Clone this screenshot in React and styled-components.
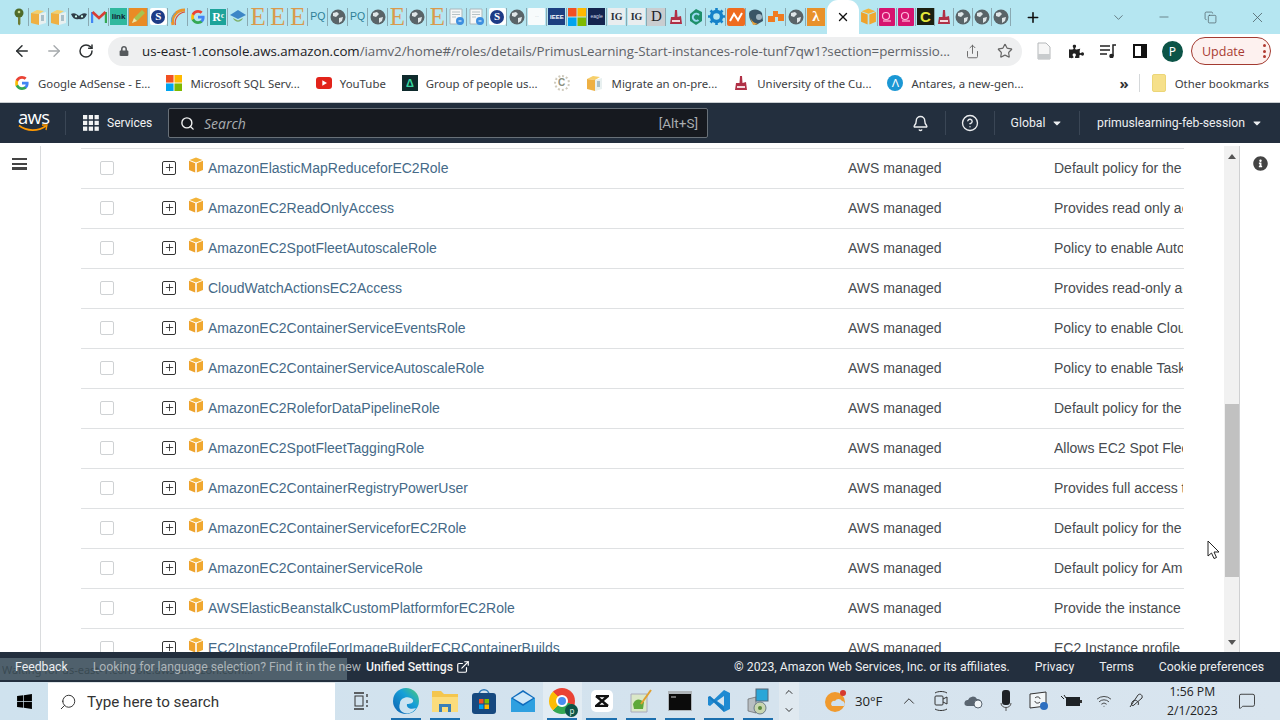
import React from "react";
import styled, { createGlobalStyle } from "styled-components";
import { ArrowLeft, ArrowRight, RotateCw, Star, Share, Bell, CircleHelp, Search, ChevronDown, ChevronUp, Minus, X, Plus, Wifi, Copy, ExternalLink, MessageSquare } from "lucide-react";
import { FaPuzzlePiece, FaInfoCircle, FaWindows, FaLock, FaCaretDown } from "react-icons/fa";

const Global = createGlobalStyle`
  html, body { margin: 0; padding: 0; background: #fff; overflow: hidden; }
  * { box-sizing: border-box; }
`;

const Page = styled.div`
  width: 1280px; height: 720px; display: flex; flex-direction: column; overflow: hidden; position: relative;
  font-family: "Liberation Sans", Arial, sans-serif; background: #fff;
`;

/* ---------- tab strip ---------- */
const TabStrip = styled.div`
  height: 34px; flex: none; background: #b5e6f1; display: flex; align-items: stretch; padding-left: 9px;
`;
const Tab = styled.div`
  width: ${p => p.$w || 19.93}px; display: flex; align-items: center; justify-content: center; position: relative;
  padding-bottom: 1px;
  &::after { content: ""; position: absolute; right: 0; top: 8px; height: 18px; width: 1px; background: #7f9aa3; opacity: ${p => p.$last ? 0 : 0.8}; }
`;
const ActiveTab = styled.div`
  width: 32px; background: #fff; border-radius: 11px 11px 0 0; display: flex; align-items: center; justify-content: center;
  color: #111; margin-left: 1px; flex: none;
`;
const NewTab = styled.div`
  margin-left: 14px; width: 16px; display: flex; align-items: center; color: #111;
`;
const WindowControls = styled.div`
  margin-left: auto; display: flex; align-items: center; color: #4b5b62;
`;
const WinBtn = styled.div`
  width: ${p => p.$w}px; display: flex; justify-content: center;
`;
const Fav = styled.span`
  width: ${p => p.$s || 16}px; height: ${p => p.$h || p.$s || 16}px; display: inline-flex; align-items: center; justify-content: center; flex: none;
  background: ${p => p.$bg || "transparent"}; color: ${p => p.$fg || "#333"};
  font-family: ${p => p.$serif ? '"Liberation Serif", serif' : '"Liberation Sans", sans-serif'};
  font-size: ${p => p.$fs || 12}px; font-weight: ${p => p.$fw || 400}; line-height: 1; overflow: hidden;
  border-radius: ${p => p.$r || 0}px; letter-spacing: ${p => p.$ls || 0}px;
`;

const Box = ({ s = 16 }) => (
  <svg width={s} height={s} viewBox="0 0 16 16">
    <path d="M8 0.5 L14.5 3 L8 5.5 L1.5 3Z" fill="#f3b43a" />
    <path d="M1 3.8 L7.2 6.2 V15.5 L1 13Z" fill="#eea22c" />
    <path d="M15 3.8 L8.8 6.2 V15.5 L15 13Z" fill="#f0a830" />
  </svg>
);
const BoxDoc = () => (
  <svg width="18" height="18" viewBox="0 0 18 18">
    <path d="M1 5 L7 2 L14 3 L9 6Z" fill="#f6cf6a" />
    <path d="M1 5 L9 6 V17 L1 15Z" fill="#eeb043" />
    <path d="M9 6 L16 4 V15 L9 17Z" fill="#e8f0f0" />
    <path d="M11 8h3M11 10h3M11 12h3" stroke="#6b8fa0" strokeWidth="1" />
  </svg>
);
const Globe = () => (
  <svg width="16" height="16" viewBox="0 0 16 16">
    <circle cx="8" cy="8" r="7.5" fill="#596468" />
    <path d="M3 4 L7 3 L9 5 L6 8 L3 7Z M9 9 L13 8 L12 12 L9 14Z" fill="#dfe6e8" />
  </svg>
);
const DocE = () => (
  <svg width="16" height="18" viewBox="0 0 16 18">
    <path d="M1 1h12v15H1z" fill="#f6f7f7" stroke="#a9b7bb" />
    <path d="M3 4h8M3 6.5h8M3 9h4" stroke="#b6c2c5" />
    <circle cx="11" cy="13" r="4" fill="#3d8fe0" />
    <path d="M9.5 13h3" stroke="#fff" />
  </svg>
);
const Key = () => (
  <svg width="12" height="18" viewBox="0 0 12 18">
    <circle cx="6" cy="5" r="4.5" fill="#4f6b2a" />
    <circle cx="6" cy="4" r="1.3" fill="#c8d890" />
    <path d="M5 9h2.4v7l-1.2 1.4L5 16z" fill="#6d7c36" />
  </svg>
);
const Bird = () => (
  <svg width="16" height="12" viewBox="0 0 16 12">
    <path d="M0 3 C3 1 6 3 8 5 C10 3 13 1 16 3 C14 8 11 9 8 8 C5 9 2 8 0 3Z" fill="#2f3d48" />
    <circle cx="5" cy="5.4" r="1.1" fill="#cfe" /><circle cx="11" cy="5.4" r="1.1" fill="#cfe" />
  </svg>
);
const Gmail = () => (
  <svg width="16" height="14" viewBox="0 0 16 14">
    <path d="M1 13V2" stroke="#4285f4" strokeWidth="2.4" /><path d="M15 13V2" stroke="#34a853" strokeWidth="2.4" />
    <path d="M1.5 2 L8 8 L14.5 2" fill="none" stroke="#d93d33" strokeWidth="2.6" />
  </svg>
);
const Pencil = () => (
  <svg width="18" height="18" viewBox="0 0 18 18">
    <rect width="18" height="18" fill="#e98b25" />
    <path d="M3 15 L5 10 L13 2 L16 5 L8 13Z" fill="#a7c350" />
    <path d="M3 15 L5 10 L8 13Z" fill="#f7e1a5" />
  </svg>
);
const Seal = () => (
  <Fav $bg="#fff" $s={17} $r={2}>
    <Fav as="span" $s={14} $r={7} $bg="#1d3b86" $fg="#fff" $fs={11} $fw={700} $serif>S</Fav>
  </Fav>
);
const Arc = () => (
  <svg width="18" height="18" viewBox="0 0 18 18">
    <path d="M4 17 C2 9 7 2 16 2" fill="none" stroke="#e9952a" strokeWidth="3" />
    <path d="M6.5 17 C5 11 9 5 16 4" fill="none" stroke="#d94d3a" strokeWidth="1.2" />
    <path d="M2.5 14 C2 10 4 6 7 4" fill="none" stroke="#5aa6d6" strokeWidth="1" />
  </svg>
);
const GoogleG = ({ s = 16 }) => (
  <svg width={s} height={s} viewBox="0 0 16 16">
    <path d="M14.6 8.2c0-.5 0-1-.1-1.4H8v2.7h3.7c-.2.9-.7 1.6-1.4 2.1v1.7h2.3c1.3-1.2 2-3 2-5.1z" fill="#4285f4" />
    <path d="M8 15c1.9 0 3.5-.6 4.6-1.7l-2.3-1.7c-.6.4-1.4.7-2.3.7-1.8 0-3.3-1.2-3.9-2.8H1.8v1.8C3 13.5 5.3 15 8 15z" fill="#34a853" />
    <path d="M4.1 9.5C3.8 8.6 3.8 7.4 4.1 6.5V4.7H1.8c-.8 1.5-.8 5.1 0 6.6z" fill="#fbbc05" />
    <path d="M8 3.8c1 0 1.9.4 2.6 1l2-2C11.4 1.7 9.800 1 8 1 5.300 1 3 2.500 1.800 4.700l2.300 1.800C4.700 5 6.200 3.800 8 3.800z" fill="#ea4335" />
  </svg>
);
const Cap = () => (
  <svg width="18" height="16" viewBox="0 0 18 16">
    <path d="M9 1 L17 6 L9 10 L1 6Z" fill="#3d86c6" />
    <path d="M4 9 C6 14 12 14 14 9 L9 11.500Z" fill="#7fb069" />
  </svg>
);
const MsLogo = ({ s = 18 }) => (
  <svg width={s} height={s} viewBox="0 0 18 18">
    <rect width="8.500" height="8.500" fill="#f25022" /><rect x="9.500" width="8.500" height="8.500" fill="#ffb900" />
    <rect y="9.500" width="8.500" height="8.500" fill="#00a4ef" /><rect x="9.500" y="9.500" width="8.500" height="8.500" fill="#7fba00" />
  </svg>
);
const RedMark = ({ s = 16 }) => (
  <svg width={s} height={s} viewBox="0 0 16 16">
    <path d="M7 1 L9 1 L9.500 8 L13 7 L14 15 L2 15 L3 8 L6.500 8Z" fill="#b03046" />
    <rect x="4" y="11" width="8" height="2" fill="#f3d9de" />
  </svg>
);
const EMark = () => (
  <svg width="16" height="18" viewBox="0 0 16 18">
    <path d="M8 1 L14 4 V13 L8 17 L2 13 V6Z" fill="#1f8f6a" />
    <path d="M11 7 A3.500 3.500 0 1 0 10.500 12" fill="none" stroke="#9ad8f0" strokeWidth="2" />
  </svg>
);
const Gear = () => (
  <svg width="17" height="17" viewBox="0 0 17 17">
    <circle cx="8.500" cy="8.500" r="5.000" fill="none" stroke="#1682c9" strokeWidth="3.400" />
    <g stroke="#1682c9" strokeWidth="2.600">
      <path d="M8.500 0v3M8.500 14v3M0 8.500h3M14 8.500h3M2.500 2.500l2 2M12.500 12.500l2 2M14.500 2.500l-2 2M4.500 12.500l-2 2" />
    </g>
  </svg>
);
const Wave = () => (
  <svg width="18" height="18" viewBox="0 0 18 18">
    <rect width="18" height="18" rx="2" fill="#ef6c1f" />
    <path d="M3 13 L7 6 L11 12 L15 5" fill="none" stroke="#fff" strokeWidth="2" />
  </svg>
);
const BirdBall = () => (
  <svg width="18" height="18" viewBox="0 0 18 18">
    <path d="M2 5 C5 0 12 1 15 5 L16 13 L9 17 C4 15 2 11 2 5Z" fill="#3a5566" />
    <path d="M3 9 C5 14 9 16 12 16 L6 17Z" fill="#e8a33a" />
    <circle cx="12" cy="9" r="3" fill="#9fb4c0" />
  </svg>
);
const OrangeLink = () => (
  <svg width="18" height="16" viewBox="0 0 18 16">
    <path d="M1 7h5v-5h5v3h6v7h-6v-4H8v5H1z" fill="#ef7c22" />
  </svg>
);
const Lambda = () => (
  <Fav $s={18} $bg="#e8912a" $fg="#fff" $fs={15} $fw={700} $serif>λ</Fav>
);
const PinkCloud = () => (
  <svg width="16" height="18" viewBox="0 0 16 18">
    <rect width="16" height="18" rx="1" fill="#d6136f" />
    <circle cx="7" cy="8" r="3.500" fill="none" stroke="#fbd" strokeWidth="1.200" />
    <path d="M4 13h8" stroke="#fbd" strokeWidth="1.200" />
  </svg>
);
const WhiteCard = () => (
  <Fav $s={17} $bg="#f7fbfc" $r={1} $fg="#7a8a90" $fs={4}>···</Fav>
);

const fav = [
  <Key />, <BoxDoc />, <BoxDoc />, <Bird />, <Gmail />,
  <Fav $s={17} $bg="#2fb89e" $fg="#123" $fs={8} $fw={700}>link</Fav>,
  <Pencil />, <Seal />, <Arc />, <GoogleG />,
  <Fav $s={16} $bg="#1da39a" $fg="#fff" $fs={12} $fw={700} $serif>Rᶜ</Fav>,
  <Cap />,
];
const E = () => <Fav $s={18} $h={28} $fg="#d99a4e" $fs={25} $serif>E</Fav>;
const PQ = () => <Fav $s={18} $fg="#2f7f96" $fs={10.500}>PQ</Fav>;
const IG = () => <Fav $s={17} $bg="#e9edef" $fg="#27313a" $fs={10} $fw={700} $serif>IG</Fav>;
const tabs = [
  ...fav, <E />, <E />, <E />, <PQ />, <Globe />, <PQ />, <Globe />, <E />, <Globe />, <E />, <DocE />, <DocE />,
  <Seal />, <Globe />, <WhiteCard />,
  <Fav $s={17} $bg="#1c3f80" $fg="#fff" $fs={6} $fw={700}>IEEE</Fav>, <MsLogo />,
  <Fav $s={17} $bg="#14254f" $fg="#cfd8e8" $fs={5}>eagle</Fav>,
  <IG />, <IG />,
  <Fav $s={18} $bg="#c9cdd0" $fg="#1c2226" $fs={15} $serif>D</Fav>,
  <RedMark />, <EMark />, <Gear />, <Wave />, <BirdBall />, <OrangeLink />, <Globe />, <Lambda />,
];
const tabsAfter = [
  <Box s={17} />, <PinkCloud />, <PinkCloud />,
  <Fav $s={17} $bg="#1b1f10" $fg="#e3e63a" $fs={15} $fw={700}>C</Fav>,
  <RedMark />, <Globe />, <Globe />, <Globe />,
];

/* ---------- toolbar ---------- */
const Toolbar = styled.div`
  height: 34px; flex: none; display: flex; align-items: center; padding-left: 6px; background: #fff; color: #333;
`;
const NavBtn = styled.div`
  width: 32px; display: flex; justify-content: center; color: ${p => p.$off ? "#a5a9ac" : "#2b2f31"}; flex: none;
`;
const Omnibox = styled.div`
  width: 914px; height: 29px; margin-left: 6px; background: #eeeff0; border-radius: 15px; flex: none;
  display: flex; align-items: center; padding-left: 11px; color: #55595c;
`;
const UrlText = styled.div`
  margin-left: 13px; font-family: "Open Sans", sans-serif; font-size: 13.330px; color: #5f6368; white-space: nowrap; width: 810px; letter-spacing: -0.040px;
  b { font-weight: 400; color: #202124; }
`;
const OmniIcons = styled.div`
  display: flex; align-items: center; gap: 17px; margin-left: 13px; color: #666;
`;
const ToolIcons = styled.div`
  display: flex; align-items: center; margin-left: 6px;
`;
const ToolIcon = styled.div`
  width: 32px; display: flex; justify-content: center; color: #222;
`;
const Avatar = styled.div`
  width: 21px; height: 21px; border-radius: 50%; background: #0c5447; color: #fff; font: 400 12px "Noto Sans", sans-serif;
  display: flex; align-items: center; justify-content: center; margin-left: 6px;
`;
const UpdatePill = styled.div`
  margin-left: 8px; width: 80px; height: 28px; border: 1px solid #a33a30; border-radius: 14px; background: #fdf1ef; color: #a83b32;
  font: 400 12.500px "Open Sans", sans-serif; display: flex; align-items: center; padding-left: 10px; gap: 18px;
`;
const Dots = styled.span`
  display: flex; flex-direction: column; gap: 2.500px;
  i { width: 3px; height: 3px; border-radius: 50%; background: #b03a30; display: block; }
`;

/* ---------- bookmarks ---------- */
const Bookmarks = styled.div`
  height: 35px; flex: none; display: flex; align-items: center; padding: 0 11px 4px 14px; gap: 16px; background: #fff;
  border-bottom: 1px solid #c9ced1;
`;
const Bm = styled.div`
  display: flex; align-items: center; gap: 8px; font-family: "Noto Sans", sans-serif; font-size: 11.400px; color: #3c4043; white-space: nowrap;
`;
const BmEnd = styled.div`
  margin-left: auto; display: flex; align-items: center; gap: 12px; font-family: "Noto Sans", sans-serif; font-size: 11.400px; color: #3c4043;
`;
const Chevrons = styled.span`
  font-size: 15px; color: #333; font-weight: 700; margin-right: -2px;
`;
const VSep = styled.span`
  width: 1px; height: 18px; background: #d5d8da;
`;
const Folder = styled.span`
  width: 14px; height: 18px; border-radius: 2px; background: #f6e08a; border: 1px solid #ecd678; display: block; margin-right: -3px;
`;
const YouTube = () => (
  <svg width="16" height="12" viewBox="0 0 16 12"><rect width="16" height="12" rx="3" fill="#e2231a" /><path d="M6.300 3.200 L11 6 L6.300 8.800Z" fill="#fff" /></svg>
);
const Delta = () => (
  <Fav $s={16} $bg="#0e2a2c" $fg="#38d6a0" $fs={11} $fw={700}>Δ</Fav>
);
const CBadge = () => (
  <Fav $s={16} $r={8} $fg="#8a8f80" $fs={10} $fw={700} style={{ border: "2px dotted #cfcabc" }}>C</Fav>
);
const Antares = () => (
  <Fav $s={16} $r={8} $bg="#1b97d4" $fg="#fff" $fs={11}>Λ</Fav>
);

/* ---------- AWS nav ---------- */
const navFont = '"Roboto", sans-serif';
const AwsNav = styled.nav`
  height: 40px; flex: none; background: #232f3e; display: flex; align-items: center; color: #e8eaeb;
`;
const AwsLogo = styled.div`
  width: 66px; height: 24px; border-right: 1px solid #3a4655; padding-left: 18px; position: relative; display: flex; flex-direction: column; flex: none;
  span { font: 400 18.500px/15px "Open Sans", sans-serif; color: #fff; letter-spacing: -0.700px; height: 15px; display: block; margin-top: -2px; }
`;
const Services = styled.div`
  display: flex; align-items: center; gap: 8px; width: 102px; padding-left: 17px; flex: none; font: 400 12px ${navFont}; color: #f2f3f3;
`;
const AwsSearch = styled.div`
  width: 540px; height: 30px; background: #16191f; border: 1px solid #687078; border-radius: 2px; display: flex; align-items: center; padding: 0 9px 0 11px; flex: none;
  color: #f2f3f3;
`;
const SearchHint = styled.span`
  font: italic 400 14px "Open Sans", sans-serif; color: #a9adb0; margin-left: 9px; flex: 1;
`;
const AltS = styled.span`
  font: 400 13.500px ${navFont}; color: #a9adb0;
`;
const NavRight = styled.div`
  margin-left: auto; display: flex; align-items: center; height: 24px; font: 400 12.250px ${navFont}; color: #eceef0;
`;
const NavCell = styled.div`
  height: 24px; display: flex; align-items: center; justify-content: center; gap: 6px; width: ${p => p.$w}px; flex: none;
  border-right: ${p => p.$sep ? "1px solid #3a4655" : "none"};
`;

/* ---------- content ---------- */
const Body = styled.div`
  flex: 1; min-height: 0; display: flex; overflow: hidden; background: #fff;
`;
const SideRail = styled.aside`
  width: 41px; flex: none; border-right: 1px solid #dadcde; margin-top: 3px; padding: 12px 0 0 12px;
`;
const Burger = styled.div`
  width: 15px; display: flex; flex-direction: column; gap: 2.500px;
  i { display: block; height: 2.200px; background: #444; }
`;
const TableArea = styled.div`
  width: 1183px; flex: none; padding: 5px 40px 0 40px; overflow: hidden;
`;
const Row = styled.div`
  display: grid; grid-template-columns: 81px 26px 20px 640px 206px 129px; width: 1103px; height: 40px; align-items: center; padding-bottom: 2px;
  border-top: 1px solid #dfe1e3; font-size: 14px; color: #474b4f; white-space: nowrap; overflow: hidden;
`;
const CheckCell = styled.div`
  padding-left: 19px; display: flex;
`;
const Check = styled.span`
  width: 14px; height: 14px; border: 1px solid #cfd2d4; border-radius: 2px; background: #fff; display: block;
`;
const PlusBox = styled.span`
  width: 14px; height: 14px; border: 1px solid #333; border-radius: 2px; display: flex; align-items: center; justify-content: center; color: #222;
`;
const PolicyIcon = styled.span`
  display: flex; margin-bottom: 5px;
`;
const PolicyLink = styled.a`
  color: #456a88; text-decoration: none;
`;
const Clip = styled.div`
  overflow: hidden;
`;
const ScrollBar = styled.div`
  width: 16px; flex: none; background: #f1f1f1; border-right: 1px solid #cfd0d2; margin-top: 3px; display: flex; flex-direction: column; align-items: center;
  padding-top: 8px; color: #555;
`;
const Thumb = styled.div`
  width: 14px; height: 173px; background: #c1c1c1; margin-top: 245px;
`;
const ArrowUp = styled.span`
  width: 0; height: 0; border: 4px solid transparent; border-top: 0; border-bottom: 5px solid #555;
`;
const ArrowDown = styled.span`
  width: 0; height: 0; border: 4px solid transparent; border-bottom: 0; border-top: 5px solid #555; margin-top: 63px;
`;
const InfoRail = styled.div`
  flex: 1; padding: 13px 0 0 13px; color: #444;
`;
const Cursor = styled.svg`
  position: absolute; left: 1207px; top: 540px;
`;

/* ---------- footer ---------- */
const Footer = styled.footer`
  height: 30px; flex: none; background: #232f3e; position: relative; display: flex; align-items: center; padding: 0 16px 1px 15px;
  font: 400 12.250px ${navFont}; color: #eceef0; white-space: nowrap;
`;
const Bubble = styled.div`
  position: absolute; left: 0; top: 6px; width: 347px; height: 22px; background: rgba(140,165,172,0.42); color: rgba(40,55,60,.55);
  font: 400 11px "Noto Sans", sans-serif; padding: 4px 0 0 2px; z-index: 0;
`;
const FootText = styled.span`
  position: relative; z-index: 1;
`;
const Lang = styled.span`
  position: relative; z-index: 1; margin-left: 25px; color: #adb5b9; display: flex; align-items: center;
  b { color: #f2f3f3; font-weight: 500; margin-left: 5px; }
  svg { margin-left: 3px; color: #fff; }
`;
const FootRight = styled.div`
  margin-left: auto; display: flex; gap: 25px; position: relative; z-index: 1;
`;

/* ---------- taskbar ---------- */
const Taskbar = styled.div`
  height: 38px; flex: none; background: linear-gradient(90deg, #cfe2ee, #d5e3ee 60%, #d9e5ef); display: flex; align-items: center; position: relative; color: #222;
`;
const StartBtn = styled.div`
  width: 48px; display: flex; justify-content: center; color: #000; flex: none;
`;
const SearchBox = styled.div`
  width: 287px; height: 38px; flex: none; background: #fff; border-top: 1px solid #dfe5e9; display: flex; align-items: center; padding-left: 11px; gap: 10px;
  font: 400 15.200px ${navFont}; color: #333;
`;
const TaskSlot = styled.div`
  width: ${p => p.$w || 39.200}px; height: 38px; flex: none; display: flex; align-items: center; justify-content: center; position: relative;
  background: ${p => p.$active ? "#e2ecf3" : "transparent"};
  &::after { content: ""; display: ${p => p.$open ? "block" : "none"}; position: absolute; bottom: 0; left: 4.500px; right: 4.500px; height: 2px; background: #1c6fae; }
`;
const ChevronStack = styled.div`
  width: 20px; height: 38px; background: #e0e9f0; margin-left: 1px; display: flex; flex-direction: column; align-items: center; justify-content: center; gap: 6px; color: #333; flex: none;
`;
const TrayRow = styled.div`
  display: flex; align-items: center; flex: 1; padding-left: 22px;
`;
const Temp = styled.span`
  font: 400 13.200px "Open Sans", sans-serif; color: #222; margin-left: 2px; width: 38px;
`;
const TraySlot = styled.div`
  width: ${p => p.$w || 32.500}px; display: flex; justify-content: center; color: #333; flex: none;
`;
const Clock = styled.div`
  width: 80px; text-align: center; font: 400 12.200px/19px "Open Sans", sans-serif; color: #222; flex: none;
`;
const ChromeBall = styled.span`
  width: 26px; height: 26px; border-radius: 50%; position: relative; display: block;
  background: conic-gradient(#ea4335 0 30%, #34a853 30% 62%, #fbbc05 62% 88%, #ea4335 88%);
  &::before { content: ""; position: absolute; inset: 7px; border-radius: 50%; background: #4a8ef0; border: 2px solid #fff; }
`;
const ChromeBadge = styled.span`
  position: absolute; right: -3px; bottom: -3px; width: 13px; height: 13px; border-radius: 50%; background: #0c5447; color: #d8f0e0;
  font: 400 8px/13px "Noto Sans", sans-serif; text-align: center;
`;

const Edge = () => (
  <svg width="28" height="28" viewBox="0 0 28 28">
    <defs><linearGradient id="eg" x1="0" y1="1" x2="1" y2="0"><stop offset="0" stopColor="#0c5fb0" /><stop offset="0.6" stopColor="#17a0d8" /><stop offset="1" stopColor="#52cc70" /></linearGradient></defs>
    <circle cx="14" cy="14" r="13" fill="url(#eg)" />
    <path d="M8 16 C8 10 18 8 21 13 C22 16 18 17 15 17 C14 21 19 23 24 21 C21 27 13 28 9 24 C7 22 7 19 8 16Z" fill="#d5e8f2" opacity="0.95" />
  </svg>
);
const Explorer = () => (
  <svg width="28" height="24" viewBox="0 0 28 24">
    <path d="M1 2h9l3 3h14v18H1z" fill="#f4c64e" /><path d="M1 8h26v15H1z" fill="#fbdc7c" />
    <path d="M8 23v-8h12v8h-3v-5h-6v5z" fill="#3a7fb8" />
  </svg>
);
const Store = () => (
  <svg width="26" height="28" viewBox="0 0 26 28">
    <path d="M8 8 C8 1 18 1 18 8" fill="none" stroke="#2b78b8" strokeWidth="1.600" />
    <rect x="1" y="6" width="24" height="21" rx="3" fill="#16497f" />
    <rect x="8" y="12" width="4.500" height="4.500" fill="#f25022" /><rect x="13.500" y="12" width="4.500" height="4.500" fill="#7fba00" />
    <rect x="8" y="17.500" width="4.500" height="4.500" fill="#00a4ef" /><rect x="13.500" y="17.500" width="4.500" height="4.500" fill="#ffb900" />
  </svg>
);
const Mail = () => (
  <svg width="26" height="24" viewBox="0 0 26 24">
    <path d="M1 9 L13 1 L25 9 V23 H1Z" fill="#0f6cbd" /><path d="M3 9 L13 3 L23 9 L13 15Z" fill="#cfe8f8" />
    <path d="M1 9 L13 17 L25 9 V23 H1Z" fill="#2ea0e0" />
  </svg>
);
const CapCut = () => (
  <Fav $s={22} $r={5} $bg="#fff">
    <svg width="14" height="12" viewBox="0 0 14 12"><path d="M1 1h12L1 11h12M1 1l12 10" fill="none" stroke="#111" strokeWidth="2.400" /></svg>
  </Fav>
);
const Notepad = () => (
  <svg width="24" height="26" viewBox="0 0 24 26">
    <path d="M2 6h16v18H2z" fill="#dbe8c8" stroke="#aab" /><path d="M4 16 C7 10 11 11 15 14 L14 21 H5Z" fill="#5fa83a" />
    <path d="M12 16 L22 2" stroke="#e0a030" strokeWidth="2" />
  </svg>
);
const Cmd = () => (
  <svg width="24" height="20" viewBox="0 0 24 20"><rect width="24" height="20" fill="#aeb4b8" /><rect x="1" y="3" width="22" height="16" fill="#0b0b0b" /><path d="M3 6h5" stroke="#ccc" /></svg>
);
const VsCode = () => (
  <svg width="24" height="24" viewBox="0 0 24 24">
    <path d="M17 1 L23 4 V20 L17 23 L7 13.500 L3 17 L1 16 V8 L3 7 L7 10.500Z" fill="#1f8ad2" />
    <path d="M17 7 L10 12 L17 17Z" fill="#d5e3ee" /><path d="M1 8 L3 7 L17 19 L17 23Z" fill="#0f6cb0" opacity="0.5" />
  </svg>
);
const Setup = () => (
  <svg width="24" height="28" viewBox="0 0 24 28">
    <path d="M2 12 L10 10 V26 L2 24Z" fill="#b8bec2" stroke="#555" strokeWidth="0.600" />
    <rect x="10" y="2" width="12" height="12" fill="#2aa6d8" stroke="#567" />
    <circle cx="14" cy="21" r="6" fill="#c9d6b0" stroke="#567" strokeWidth="0.800" /><circle cx="14" cy="21" r="2" fill="#5a8a3c" />
  </svg>
);
const Weather = () => (
  <svg width="24" height="24" viewBox="0 0 24 24">
    <circle cx="10" cy="13" r="10" fill="#f09a2e" />
    <path d="M7 17 a3 3 0 0 1 3-5 a4 4 0 0 1 7 0 a3 3 0 0 1 2 5z" fill="#cfe0ee" />
    <circle cx="18" cy="4" r="3" fill="#d63a2f" />
  </svg>
);
const MeetNow = () => (
  <svg width="16" height="22" viewBox="0 0 16 22" fill="none" stroke="#333">
    <rect x="2" y="6" width="8" height="9" rx="1" /><path d="M10 9l4-2v7l-4-2M2 3c3-2 9-2 12 0M2 19c3 2 9 2 12 0" />
  </svg>
);
const CloudSync = () => (
  <svg width="20" height="16" viewBox="0 0 20 16">
    <path d="M3 13 a3 3 0 0 1 1-6 a5 5 0 0 1 9-1 a4 4 0 0 1 3 7z" fill="#5a6570" />
    <circle cx="14" cy="11" r="4" fill="#f2f6f8" stroke="#5a6570" />
  </svg>
);
const MicIcon = () => (
  <svg width="12" height="22" viewBox="0 0 12 22"><rect x="2" y="0" width="8" height="15" rx="3" fill="#1e2226" /><path d="M1 13c0 6 10 6 10 0M6 17v4" stroke="#555" fill="none" /></svg>
);
const Screen = () => (
  <svg width="20" height="20" viewBox="0 0 20 20" fill="none">
    <path d="M1 3 L17 1 V15 L1 17Z" fill="#f2f6f8" stroke="#333" /><path d="M6 7c2-2 5-1 5 1M11 11c-2 2-5 1-5-1" stroke="#333" />
    <circle cx="15" cy="15" r="4" fill="#2d6fc0" />
  </svg>
);
const Plug = () => (
  <svg width="22" height="14" viewBox="0 0 22 14"><path d="M1 2l3 3M4 1l2 3" stroke="#222" /><rect x="6" y="3" width="14" height="9" fill="#1e2226" /><path d="M20 6h2v3h-2" fill="#333" /></svg>
);
const Pen = () => (
  <svg width="16" height="18" viewBox="0 0 16 18" fill="none" stroke="#333">
    <path d="M2 15 L10 3 C12 1 15 3 14 6 L6 13 C4 15 2 12 5 9 C8 7 12 10 10 13" />
  </svg>
);

const policies = [
  ["AmazonElasticMapReduceforEC2Role", "Default policy for the Amazon"],
  ["AmazonEC2ReadOnlyAccess", "Provides read only access"],
  ["AmazonEC2SpotFleetAutoscaleRole", "Policy to enable Autoscaling"],
  ["CloudWatchActionsEC2Access", "Provides read-only access"],
  ["AmazonEC2ContainerServiceEventsRole", "Policy to enable CloudWatch"],
  ["AmazonEC2ContainerServiceAutoscaleRole", "Policy to enable Task"],
  ["AmazonEC2RoleforDataPipelineRole", "Default policy for the Amazon"],
  ["AmazonEC2SpotFleetTaggingRole", "Allows EC2 Spot Fleet"],
  ["AmazonEC2ContainerRegistryPowerUser", "Provides full access to"],
  ["AmazonEC2ContainerServiceforEC2Role", "Default policy for the Amazon"],
  ["AmazonEC2ContainerServiceRole", "Default policy for Amazon ECS"],
  ["AWSElasticBeanstalkCustomPlatformforEC2Role", "Provide the instance"],
  ["EC2InstanceProfileForImageBuilderECRContainerBuilds", "EC2 Instance profile for"],
];

const GridIcon = () => (
  <svg width="16" height="16" viewBox="0 0 18 18" fill="#f2f3f3">
    {[0, 6.500, 13].flatMap(y => [0, 6.500, 13].map(x => <rect key={x + "-" + y} x={x} y={y} width="4.800" height="4.800" />))}
  </svg>
);

export default function App() {
  return (
    <Page>
      <Global />
      <TabStrip>
        {tabs.map((t, i) => <Tab key={i} $last={i === tabs.length - 1}>{t}</Tab>)}
        <ActiveTab><X size={14} strokeWidth={2.4} /></ActiveTab>
        {tabsAfter.map((t, i) => <Tab key={i} $w={19.000}>{t}</Tab>)}
        <NewTab><Plus size={17} strokeWidth={2.4} /></NewTab>
        <WindowControls>
          <WinBtn $w={46}><ChevronDown size={15} strokeWidth={1.2} /></WinBtn>
          <WinBtn $w={46}><Minus size={14} strokeWidth={1.2} /></WinBtn>
          <WinBtn $w={47}><Copy size={13} strokeWidth={1.3} /></WinBtn>
          <WinBtn $w={46}><X size={17} strokeWidth={1.1} /></WinBtn>
        </WindowControls>
      </TabStrip>

      <Toolbar>
        <NavBtn><ArrowLeft size={18} strokeWidth={2} /></NavBtn>
        <NavBtn $off><ArrowRight size={18} strokeWidth={1.8} /></NavBtn>
        <NavBtn><RotateCw size={16} strokeWidth={2.2} /></NavBtn>
        <Omnibox>
          <FaLock size={10} />
          <UrlText><b>us-east-1.console.aws.amazon.com</b>/iamv2/home#/roles/details/PrimusLearning-Start-instances-role-tunf7qw1?section=permissio...</UrlText>
          <OmniIcons>
            <Share size={15} strokeWidth={1.5} />
            <Star size={16} strokeWidth={1.8} />
          </OmniIcons>
        </Omnibox>
        <ToolIcons>
          <ToolIcon>
            <svg width="14" height="18" viewBox="0 0 14 18" fill="none"><path d="M1 1h8l4 4v12H1z" stroke="#b5b8ba" fill="#f6f6f6" /><rect x="1" y="12" width="12" height="5" fill="#c8cbcd" /></svg>
          </ToolIcon>
          <ToolIcon><FaPuzzlePiece size={15} /></ToolIcon>
          <ToolIcon>
            <svg width="16" height="14" viewBox="0 0 16 14" fill="none" stroke="#222" strokeWidth="1.500"><path d="M0 2h10M0 6h10M0 10h7M13 12V1h3" /><circle cx="11.500" cy="12" r="1.500" fill="#222" /></svg>
          </ToolIcon>
          <ToolIcon>
            <svg width="14" height="14" viewBox="0 0 14 14"><path d="M0 0h14v14H0zM2 2v10h6V2z" fill="#111" fillRule="evenodd" /></svg>
          </ToolIcon>
          <Avatar>P</Avatar>
          <UpdatePill>Update <Dots><i /><i /><i /></Dots></UpdatePill>
        </ToolIcons>
      </Toolbar>

      <Bookmarks>
        <Bm><GoogleG />Google AdSense - E...</Bm>
        <Bm><MsLogo s={16} />Microsoft SQL Serv...</Bm>
        <Bm><YouTube />YouTube</Bm>
        <Bm><Delta />Group of people us...</Bm>
        <Bm><CBadge /></Bm>
        <Bm><BoxDoc />Migrate an on-pre...</Bm>
        <Bm><RedMark />University of the Cu...</Bm>
        <Bm><Antares />Antares, a new-gen...</Bm>
        <BmEnd>
          <Chevrons>»</Chevrons>
          <VSep />
          <Folder />
          Other bookmarks
        </BmEnd>
      </Bookmarks>

      <AwsNav>
        <AwsLogo>
          <span>aws</span>
          <svg width="30" height="9" viewBox="0 0 30 9"><path d="M1 1.500 C9 7.500 20 7.500 28 2" fill="none" stroke="#f90" strokeWidth="1.700" /><path d="M24 1 L29 1 L28 6" fill="none" stroke="#f90" strokeWidth="1.300" /></svg>
        </AwsLogo>
        <Services><GridIcon />Services</Services>
        <AwsSearch>
          <Search size={15} strokeWidth={2.2} />
          <SearchHint>Search</SearchHint>
          <AltS>[Alt+S]</AltS>
        </AwsSearch>
        <NavRight>
          <NavCell $w={50} $sep><Bell size={17} strokeWidth={2} /></NavCell>
          <NavCell $w={49} $sep><CircleHelp size={18} strokeWidth={1.800} /></NavCell>
          <NavCell $w={85} $sep>Global <FaCaretDown size={12} /></NavCell>
          <NavCell $w={200}>primuslearning-feb-session <FaCaretDown size={12} /></NavCell>
        </NavRight>
      </AwsNav>

      <Body>
        <SideRail><Burger><i /><i /><i /></Burger></SideRail>
        <TableArea>
          {policies.map(([name, desc]) => (
            <Row key={name}>
              <CheckCell><Check /></CheckCell>
              <PlusBox><Plus size={11} strokeWidth={1.800} /></PlusBox>
              <PolicyIcon><Box /></PolicyIcon>
              <PolicyLink>{name}</PolicyLink>
              <span>AWS managed</span>
              <Clip>{desc}</Clip>
            </Row>
          ))}
        </TableArea>
        <ScrollBar>
          <ArrowUp />
          <Thumb />
          <ArrowDown />
        </ScrollBar>
        <InfoRail><FaInfoCircle size={15} /></InfoRail>
      </Body>
      <Cursor width="14" height="20" viewBox="0 0 14 20">
        <path d="M1 1 V16 L4.500 13 L7 18.500 L9.500 17.500 L7 12 L12 12Z" fill="#fff" stroke="#222" strokeWidth="1" />
      </Cursor>

      <Footer>
        <Bubble>Waiting for us-east-1.console.aws.amazon.com...</Bubble>
        <FootText>Feedback</FootText>
        <Lang>Looking for language selection? Find it in the new <b>Unified Settings</b> <ExternalLink size={14} strokeWidth={2} /></Lang>
        <FootRight>
          <span>© 2023, Amazon Web Services, Inc. or its affiliates.</span>
          <span>Privacy</span>
          <span>Terms</span>
          <span>Cookie preferences</span>
        </FootRight>
      </Footer>

      <Taskbar>
        <StartBtn><FaWindows size={17} /></StartBtn>
        <SearchBox>
          <Search size={18} strokeWidth={1.3} style={{ transform: "scaleX(-1)" }} />
          Type here to search
        </SearchBox>
        <TaskSlot $w={51}>
          <svg width="18" height="18" viewBox="0 0 18 18" fill="none" stroke="#333"><path d="M2 1h10M2 17h10" strokeWidth="1.400" /><rect x="3" y="4" width="8" height="10" /><path d="M15 2v3M15 8v3M15 13v2" strokeWidth="1.300" /></svg>
        </TaskSlot>
        <TaskSlot $open><Edge /></TaskSlot>
        <TaskSlot $open><Explorer /></TaskSlot>
        <TaskSlot><Store /></TaskSlot>
        <TaskSlot><Mail /></TaskSlot>
        <TaskSlot $open $active><ChromeBall><ChromeBadge>p</ChromeBadge></ChromeBall></TaskSlot>
        <TaskSlot $open><CapCut /></TaskSlot>
        <TaskSlot $open><Notepad /></TaskSlot>
        <TaskSlot $open><Cmd /></TaskSlot>
        <TaskSlot $open><VsCode /></TaskSlot>
        <TaskSlot $open><Setup /></TaskSlot>
        <ChevronStack><ChevronUp size={12} strokeWidth={2} /><ChevronDown size={12} strokeWidth={2} /></ChevronStack>
        <TrayRow>
          <TraySlot $w={32}><Weather /></TraySlot>
          <Temp>30°F</Temp>
          <TraySlot $w={32}><ChevronUp size={18} strokeWidth={1.300} /></TraySlot>
          <TraySlot><MeetNow /></TraySlot>
          <TraySlot><CloudSync /></TraySlot>
          <TraySlot><MicIcon /></TraySlot>
          <TraySlot><Screen /></TraySlot>
          <TraySlot><Plug /></TraySlot>
          <TraySlot><Wifi size={16} strokeWidth={1.300} /></TraySlot>
          <TraySlot><Pen /></TraySlot>
          <Clock>1:56 PM<br />2/1/2023</Clock>
          <TraySlot $w={30}><MessageSquare size={18} strokeWidth={1.200} /></TraySlot>
        </TrayRow>
      </Taskbar>
    </Page>
  );
}
